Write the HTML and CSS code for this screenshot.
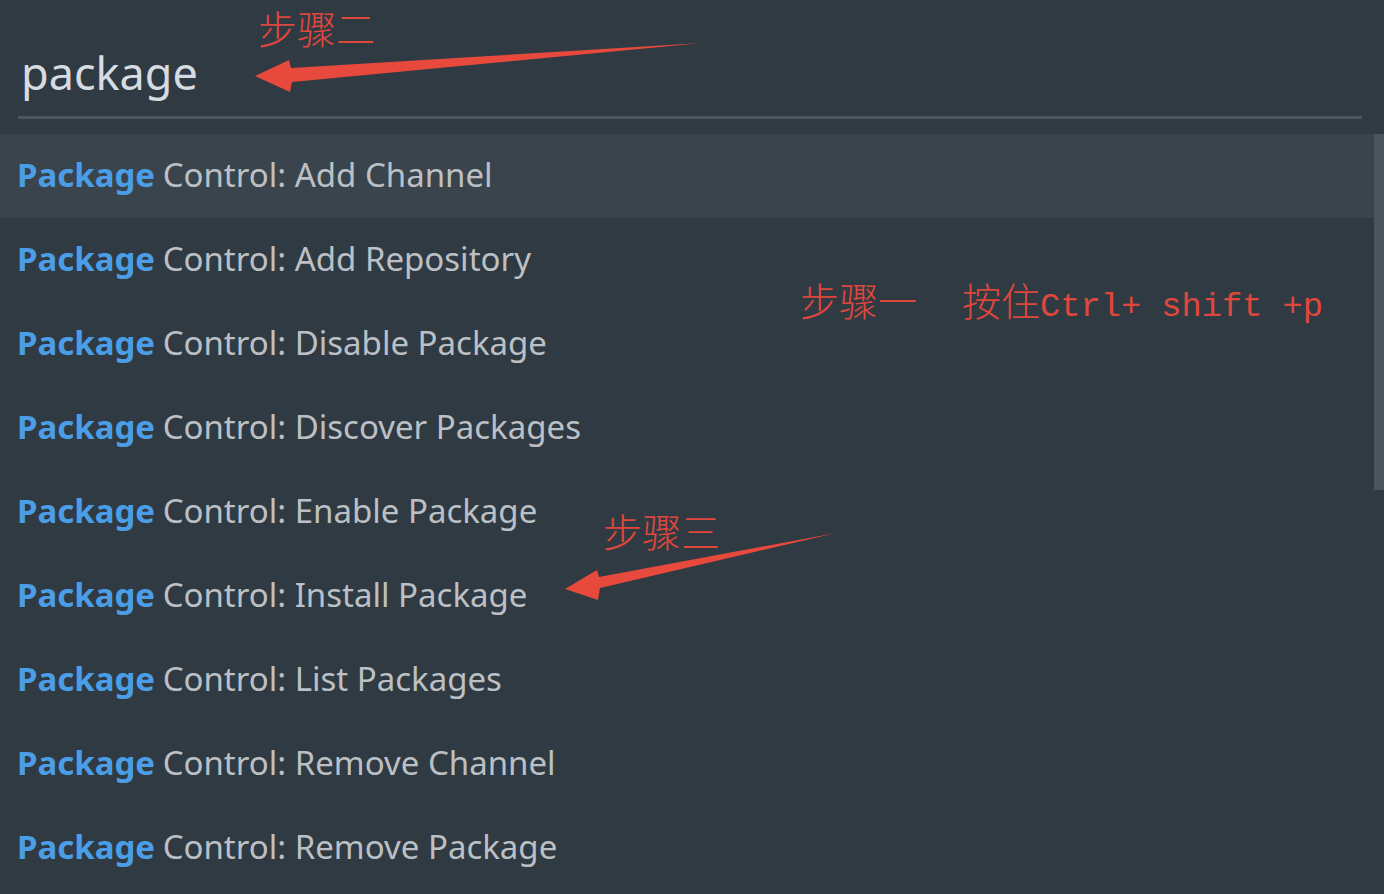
FILE: index.html
```html
<!DOCTYPE html>
<html lang="zh">
<head>
<meta charset="utf-8">
<link rel="stylesheet" href="styles.css">
<title>Package Control</title>
</head>
<body>
<div class="panel">
  <div class="search">
    <div class="query">package</div>
    <div class="rule"></div>
  </div>
  <div class="results">
    <ul class="list">
      <li class="item active"><b>Package</b> Control: Add Channel</li>
      <li class="item"><b>Package</b> Control: Add Repository</li>
      <li class="item"><b>Package</b> Control: Disable Package</li>
      <li class="item"><b>Package</b> Control: Discover Packages</li>
      <li class="item"><b>Package</b> Control: Enable Package</li>
      <li class="item"><b>Package</b> Control: Install Package</li>
      <li class="item"><b>Package</b> Control: List Packages</li>
      <li class="item"><b>Package</b> Control: Remove Channel</li>
      <li class="item"><b>Package</b> Control: Remove Package</li>
    </ul>
    <div class="scrolltrack"><div class="thumb"></div></div>
  </div>

  <div class="note note-two">步骤二</div>
  <div class="note note-one">步骤一<span class="sp"></span>按住<span class="mono">Ctrl+ shift +p</span></div>
  <div class="note note-three">步骤三</div>

  <svg class="arrows" width="1384" height="894" viewBox="0 0 1384 894" aria-hidden="true">
    <polygon fill="#e8493d" points="255,76 289,60 291,68 702,43 292,82 290,92"/>
    <polygon fill="#e8493d" points="565,589 597,570 599,577 836,533 600,588 598,600"/>
  </svg>
</div>
</body>
</html>
```
FILE: styles.css
```css
* { box-sizing: border-box; }
html, body {
  margin: 0;
  padding: 0;
  background: #2f3a43;
}
.panel {
  position: relative;
  width: 1384px;
  height: 894px;
  overflow: hidden;
  background: #2f3a43;
  font-family: "Noto Sans", "Open Sans", sans-serif;
}
.search {
  padding: 0 22px 0 18px;
}
.query {
  height: 116px;
  padding: 42px 0 0 3px;
  font-size: 45px;
  line-height: 62px;
  color: #d6dce1;
  font-family: "Noto Sans", sans-serif;
}
.rule {
  height: 3px;
  background: #4c5760;
}
.results {
  margin-top: 15px;
  display: flex;
}
.list {
  list-style: none;
  margin: 0;
  padding: 0;
  flex: 1;
}
.item {
  height: 84px;
  display: flex;
  align-items: center;
  padding: 0 0 4px 17px;
  font-size: 33px;
  color: #bcc0c5;
  white-space: pre;
}
.item b {
  color: #4b9ee6;
  font-weight: 700;
  margin-right: -1px;
}
.item.active {
  background: #3a444d;
}
.scrolltrack {
  width: 10px;
  flex: none;
}
.thumb {
  height: 356px;
  background: #4a555e;
}
.note {
  position: absolute;
  color: #e0473c;
  font-family: "Noto Sans CJK SC", sans-serif;
  font-weight: 300;
  font-size: 39px;
  line-height: 42px;
  white-space: nowrap;
}
.note-two { left: 258px; top: 6px; }
.note-one { left: 800px; top: 278px; }
.note-three { left: 603px; top: 509px; }
.sp { display: inline-block; width: 45px; }
.mono {
  font-family: "Liberation Mono", monospace;
  font-size: 33.7px;
  font-weight: 400;
}
.arrows {
  position: absolute;
  left: 0;
  top: 0;
  pointer-events: none;
}
```
